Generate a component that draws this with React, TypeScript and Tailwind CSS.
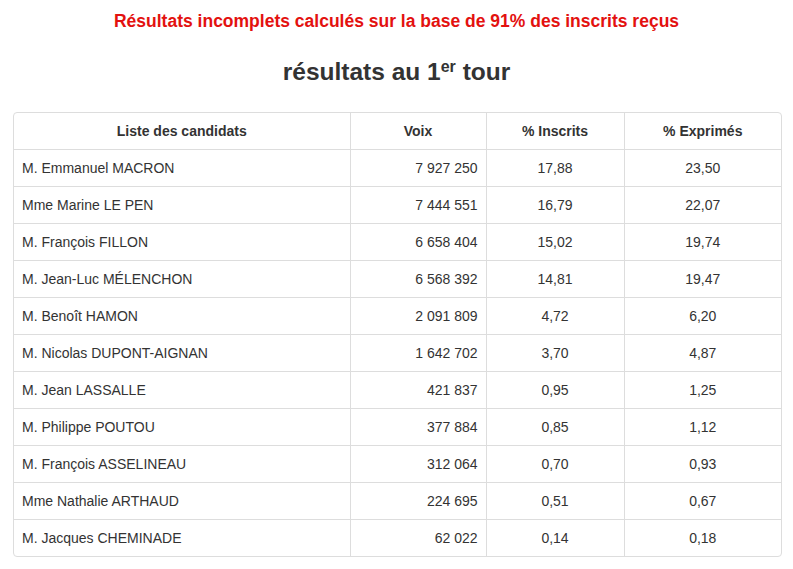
const rows: [string, string, string, string][] = [
  ['M. Emmanuel MACRON', '7 927 250', '17,88', '23,50'],
  ['Mme Marine LE PEN', '7 444 551', '16,79', '22,07'],
  ['M. François FILLON', '6 658 404', '15,02', '19,74'],
  ['M. Jean-Luc MÉLENCHON', '6 568 392', '14,81', '19,47'],
  ['M. Benoît HAMON', '2 091 809', '4,72', '6,20'],
  ['M. Nicolas DUPONT-AIGNAN', '1 642 702', '3,70', '4,87'],
  ['M. Jean LASSALLE', '421 837', '0,95', '1,25'],
  ['M. Philippe POUTOU', '377 884', '0,85', '1,12'],
  ['M. François ASSELINEAU', '312 064', '0,70', '0,93'],
  ['Mme Nathalie ARTHAUD', '224 695', '0,51', '0,67'],
  ['M. Jacques CHEMINADE', '62 022', '0,14', '0,18'],
]

export default function App() {
  return (
    <div className="min-h-screen bg-white px-[13px] pt-[11px] font-['Liberation_Sans',Arial,sans-serif] text-[14px] leading-5 text-[#333]">
      <p className="text-center text-[17.5px] font-bold leading-5 text-[#e3110f]">
        Résultats incomplets calculés sur la base de 91% des inscrits reçus
      </p>
      <h2 className="mt-[26px] text-center text-[24.5px] font-bold leading-[30px] text-[#333]">
        résultats au 1<sup className="text-[16px]">er</sup> tour
      </h2>
      <div className="mt-[25px] w-[769px] overflow-hidden rounded-[4px] border border-[#ddd]">
        <table className="w-full table-fixed border-collapse">
          <colgroup>
            <col className="w-[336px]" />
            <col className="w-[136px]" />
            <col className="w-[138px]" />
            <col />
          </colgroup>
          <thead>
            <tr>
              <th className="h-[36px] px-2 text-center font-bold">Liste des candidats</th>
              <th className="h-[36px] border-l border-[#ddd] px-2 text-center font-bold">Voix</th>
              <th className="h-[36px] border-l border-[#ddd] px-2 text-center font-bold">% Inscrits</th>
              <th className="h-[36px] border-l border-[#ddd] px-2 text-center font-bold">% Exprimés</th>
            </tr>
          </thead>
          <tbody>
            {rows.map((r) => (
              <tr key={r[0]} className="border-t border-[#ddd]">
                <td className="h-[37px] px-2 text-left">{r[0]}</td>
                <td className="h-[37px] border-l border-[#ddd] px-2 text-right">{r[1]}</td>
                <td className="h-[37px] border-l border-[#ddd] px-2 text-center">{r[2]}</td>
                <td className="h-[37px] border-l border-[#ddd] px-2 text-center">{r[3]}</td>
              </tr>
            ))}
          </tbody>
        </table>
      </div>
    </div>
  )
}
